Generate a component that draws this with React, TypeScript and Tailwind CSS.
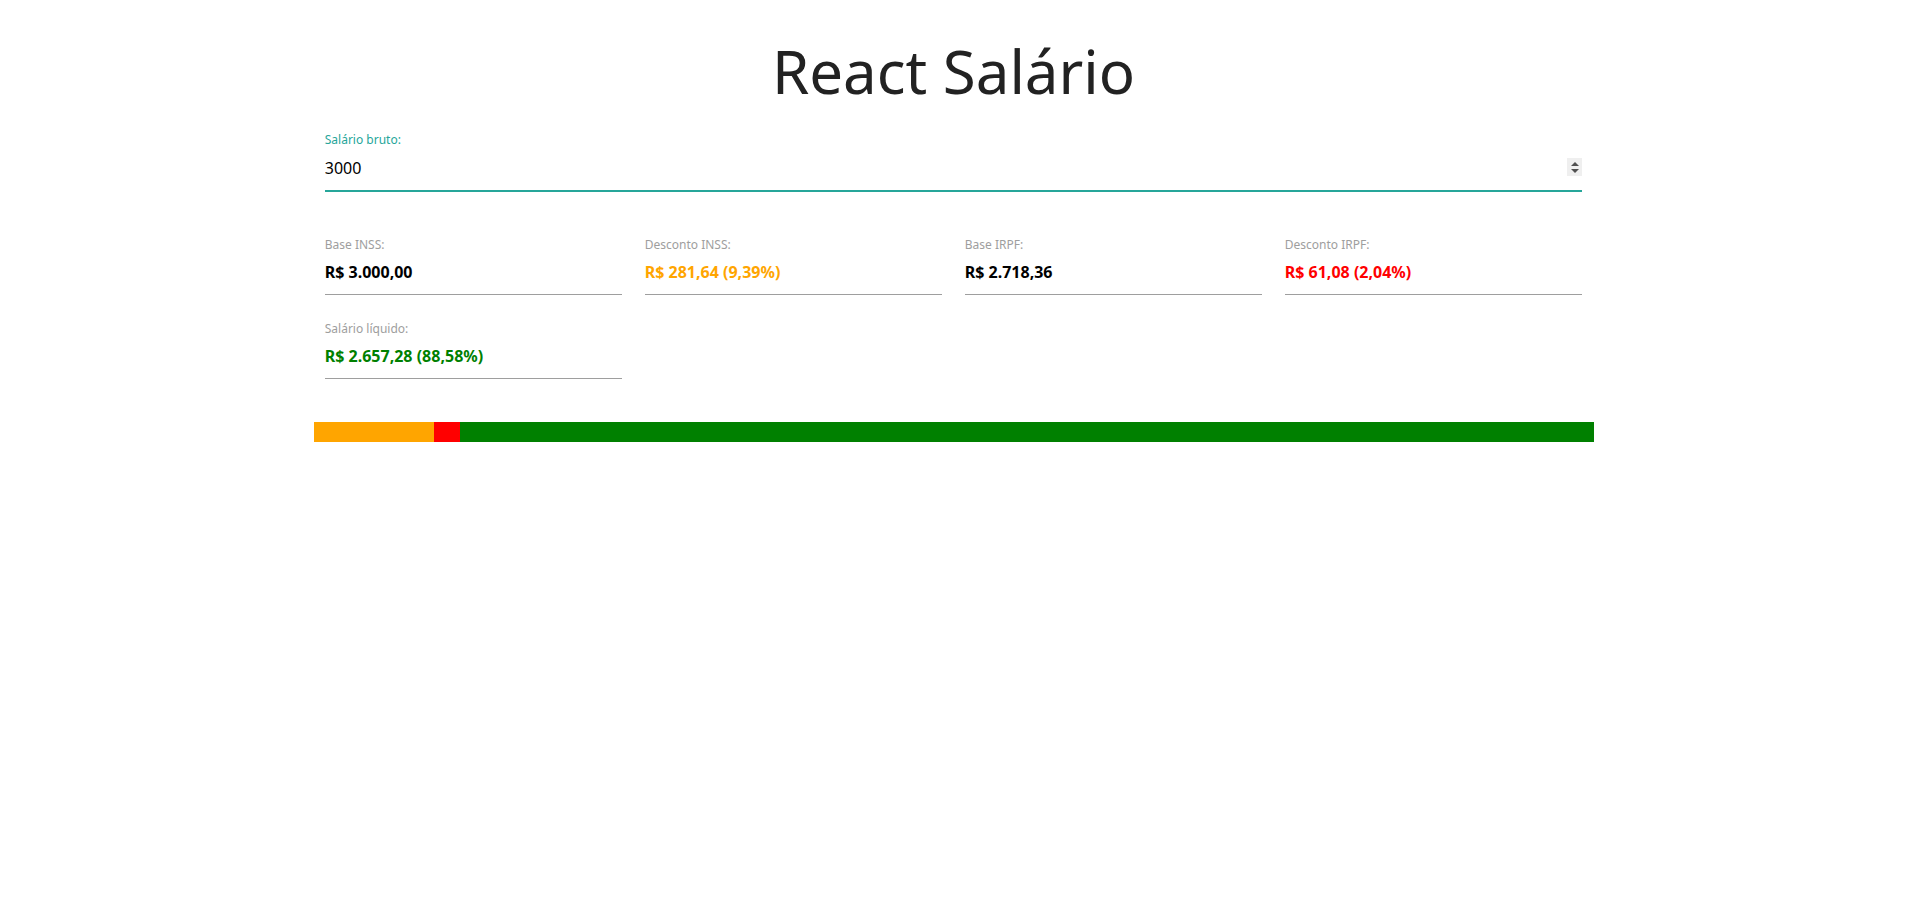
import React, { useState } from "react";

type Field = { label: string; value: string; color: string };

function formatBRL(n: number) {
  return "R$ " + n.toLocaleString("pt-BR", { minimumFractionDigits: 2, maximumFractionDigits: 2 });
}

function ResultField({ label, value, color }: Field) {
  return (
    <div className="px-[11.25px]">
      <div className="text-[12px] leading-[12px] text-[#9e9e9e]">{label}</div>
      <div
        className="h-[44px] leading-[42px] text-[16px] font-bold border-b border-[#9e9e9e] whitespace-nowrap"
        style={{ color }}
      >
        {value}
      </div>
    </div>
  );
}

export default function App() {
  const [bruto, setBruto] = useState("3000");

  const inssPct = 9.39;
  const irpfPct = 2.04;

  const fields: Field[] = [
    { label: "Base INSS:", value: formatBRL(3000), color: "#000000" },
    { label: "Desconto INSS:", value: "R$ 281,64 (9,39%)", color: "#ffa500" },
    { label: "Base IRPF:", value: "R$ 2.718,36", color: "#000000" },
    { label: "Desconto IRPF:", value: "R$ 61,08 (2,04%)", color: "#ff0000" },
    { label: "Salário líquido:", value: "R$ 2.657,28 (88,58%)", color: "#008000" },
  ];

  return (
    <div className="min-h-screen bg-white" style={{ fontFamily: '"Noto Sans", "Open Sans", sans-serif' }}>
      <div className="w-[1282px] mx-auto pl-[2px]">
        <h1 className="pt-[40px] text-center text-[60px] leading-[62px] font-normal text-[#222222]">
          React Salário
        </h1>

        <div className="mt-[32px] px-[11.25px]">
          <label className="block text-[12px] leading-[12px] text-[#26a69a]">Salário bruto:</label>
          <div className="relative h-[46px] border-b-2 border-[#26a69a]">
            <input
              type="text"
              inputMode="numeric"
              value={bruto}
              onChange={(e) => setBruto(e.target.value)}
              className="w-full h-[44px] text-[16px] text-black bg-transparent outline-none"
            />
            <div className="absolute right-0 top-[12px] w-[15px] h-[18px] bg-[#efefef] flex flex-col items-center justify-center gap-[3px]">
              <div className="w-0 h-0 border-l-[4px] border-r-[4px] border-b-[4px] border-l-transparent border-r-transparent border-b-[#505050]" />
              <div className="w-0 h-0 border-l-[4px] border-r-[4px] border-t-[4px] border-l-transparent border-r-transparent border-t-[#505050]" />
            </div>
          </div>
        </div>

        <div className="mt-[47px] grid grid-cols-4 gap-y-[28px]">
          {fields.map((f) => (
            <ResultField key={f.label} {...f} />
          ))}
        </div>

        <div className="mt-[43px] flex h-[20px] w-full">
          <div className="h-full bg-[#ffa500]" style={{ width: `${inssPct}%` }} />
          <div className="h-full bg-[#ff0000]" style={{ width: `${irpfPct}%` }} />
          <div className="h-full flex-1 bg-[#008000]" />
        </div>
      </div>
    </div>
  );
}
